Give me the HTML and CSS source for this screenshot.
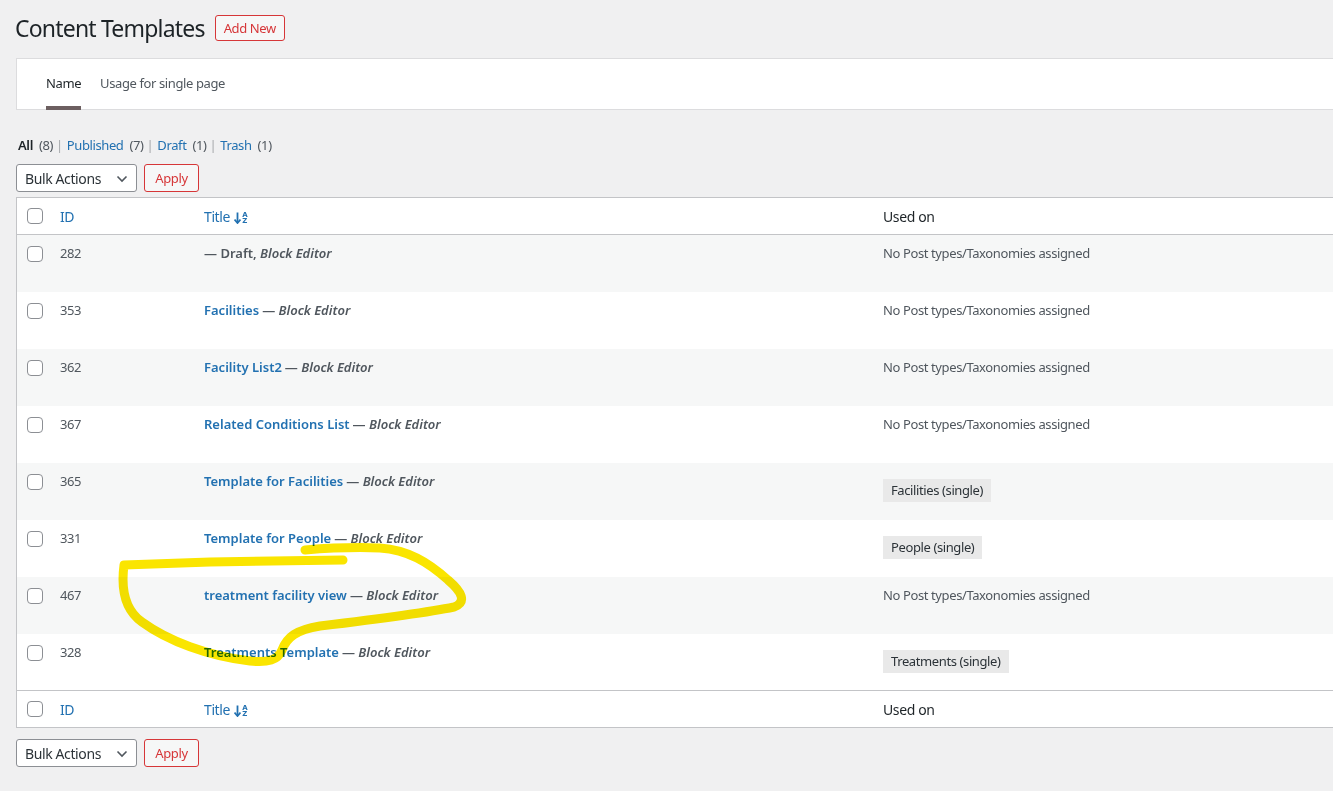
FILE: index.html
```html
<!DOCTYPE html>
<html>
<head>
<meta charset="utf-8">
<link rel="stylesheet" href="styles.css">
</head>
<body>
<div class="wrap">
  <div class="head">
    <h1 class="title">Content Templates</h1>
    <a class="btn-outline add-new">Add New</a>
  </div>

  <div class="tabs">
    <a class="tab active">Name</a>
    <a class="tab">Usage for single page</a>
  </div>

  <ul class="subsub">
    <li><b class="current">All</b><span class="count">(8)</span><span class="sep">|</span></li>
    <li><a>Published</a><span class="count">(7)</span><span class="sep">|</span></li>
    <li><a>Draft</a><span class="count">(1)</span><span class="sep">|</span></li>
    <li><a>Trash</a><span class="count">(1)</span></li>
  </ul>

  <div class="tablenav top">
    <div class="select">Bulk Actions
      <svg class="chev" width="12" height="8" viewBox="0 0 12 8"><path d="M1.5 1.5 L6 6 L10.5 1.5" fill="none" stroke="#50575e" stroke-width="1.6"/></svg>
    </div>
    <a class="btn-outline apply">Apply</a>
  </div>

  <table class="list">
    <thead>
      <tr class="hrow">
        <th class="cb"><span class="box"></span></th>
        <th class="c-id"><a>ID</a></th>
        <th class="c-title"><a>Title <span class="sort"><svg width="7" height="12" viewBox="0 0 7 12"><path d="M3.5 0.5 V10" stroke="#2271b1" stroke-width="1.8"/><path d="M0.5 7.5 L3.5 11 L6.5 7.5" fill="none" stroke="#2271b1" stroke-width="1.8"/></svg><span class="az"><i>A</i><i>Z</i></span></span></a></th>
        <th class="c-used">Used on</th>
      </tr>
    </thead>
    <tbody>
      <tr class="alt">
        <td class="cb"><span class="box"></span></td><td class="c-id">282</td>
        <td class="c-title"><span class="dash">— Draft, <em>Block Editor</em></span></td>
        <td class="c-used none">No Post types/Taxonomies assigned</td>
      </tr>
      <tr>
        <td class="cb"><span class="box"></span></td><td class="c-id">353</td>
        <td class="c-title"><a class="row-title">Facilities</a> <span class="dash">— <em>Block Editor</em></span></td>
        <td class="c-used none">No Post types/Taxonomies assigned</td>
      </tr>
      <tr class="alt">
        <td class="cb"><span class="box"></span></td><td class="c-id">362</td>
        <td class="c-title"><a class="row-title">Facility List2</a> <span class="dash">— <em>Block Editor</em></span></td>
        <td class="c-used none">No Post types/Taxonomies assigned</td>
      </tr>
      <tr>
        <td class="cb"><span class="box"></span></td><td class="c-id">367</td>
        <td class="c-title"><a class="row-title">Related Conditions List</a> <span class="dash">— <em>Block Editor</em></span></td>
        <td class="c-used none">No Post types/Taxonomies assigned</td>
      </tr>
      <tr class="alt">
        <td class="cb"><span class="box"></span></td><td class="c-id">365</td>
        <td class="c-title"><a class="row-title">Template for Facilities</a> <span class="dash">— <em>Block Editor</em></span></td>
        <td class="c-used"><span class="badge">Facilities (single)</span></td>
      </tr>
      <tr>
        <td class="cb"><span class="box"></span></td><td class="c-id">331</td>
        <td class="c-title"><a class="row-title">Template for People</a> <span class="dash">— <em>Block Editor</em></span></td>
        <td class="c-used"><span class="badge">People (single)</span></td>
      </tr>
      <tr class="alt">
        <td class="cb"><span class="box"></span></td><td class="c-id">467</td>
        <td class="c-title"><a class="row-title">treatment facility view</a> <span class="dash">— <em>Block Editor</em></span></td>
        <td class="c-used none">No Post types/Taxonomies assigned</td>
      </tr>
      <tr>
        <td class="cb"><span class="box"></span></td><td class="c-id">328</td>
        <td class="c-title"><a class="row-title">Treatments Template</a> <span class="dash">— <em>Block Editor</em></span></td>
        <td class="c-used"><span class="badge">Treatments (single)</span></td>
      </tr>
    </tbody>
    <tfoot>
      <tr class="hrow">
        <th class="cb"><span class="box"></span></th>
        <th class="c-id"><a>ID</a></th>
        <th class="c-title"><a>Title <span class="sort"><svg width="7" height="12" viewBox="0 0 7 12"><path d="M3.5 0.5 V10" stroke="#2271b1" stroke-width="1.8"/><path d="M0.5 7.5 L3.5 11 L6.5 7.5" fill="none" stroke="#2271b1" stroke-width="1.8"/></svg><span class="az"><i>A</i><i>Z</i></span></span></a></th>
        <th class="c-used">Used on</th>
      </tr>
    </tfoot>
  </table>

  <div class="tablenav bottom">
    <div class="select">Bulk Actions
      <svg class="chev" width="12" height="8" viewBox="0 0 12 8"><path d="M1.5 1.5 L6 6 L10.5 1.5" fill="none" stroke="#50575e" stroke-width="1.6"/></svg>
    </div>
    <a class="btn-outline apply">Apply</a>
  </div>
</div>

<svg class="scribble" width="1333" height="791" viewBox="0 0 1333 791">
  <path d="M343 560 L210 562 L124 565 C121 588 125 610 142 622 C168 641 208 656 250 661 C268 663 278 660 282 650 C287 637 296 630 320 626 C370 620 420 614 454 607 C467 602 462 592 448 580 C428 562 408 550 380 548 C355 547 330 548 305 550"
    fill="none" stroke="#fae500" stroke-width="9" stroke-linecap="round" stroke-linejoin="round"/>
</svg>
</body>
</html>
```

FILE: styles.css
```css
html, body {
  margin: 0;
  padding: 0;
}
body {
  background: #f0f0f1;
  font-family: "Noto Sans", "Open Sans", sans-serif;
  font-size: 13px;
  letter-spacing: -0.03em;
  color: #3c434a;
  overflow: hidden;
  width: 1333px;
  height: 791px;
  position: relative;
}
a { text-decoration: none; cursor: pointer; }

.wrap {
  padding: 0 0 0 16px;
  width: 1340px;
}

.head {
  display: flex;
  align-items: center;
  gap: 10px;
  padding-top: 13px;
  height: 30px;
}
.title {
  margin: 0 0 0 -1px;
  font-size: 23px;
  font-weight: 400;
  color: #1d2327;
  line-height: 29px;
  letter-spacing: -0.035em;
}
.btn-outline {
  display: inline-flex;
  align-items: center;
  justify-content: center;
  box-sizing: border-box;
  border: 1px solid #d63638;
  color: #d63638;
  background: #f6f7f7;
  border-radius: 3px;
}
.add-new {
  height: 26px;
  padding: 0 8px;
  font-size: 13px;
}

.tabs {
  margin-top: 15px;
  height: 52px;
  box-sizing: border-box;
  background: #fff;
  border: 1px solid #dcdcde;
  border-right: none;
  display: flex;
  gap: 19px;
  padding-left: 29px;
}
.tab {
  color: #50575e;
  font-size: 13px;
  display: flex;
  align-items: flex-start;
  padding-top: 15px;
  box-sizing: border-box;
  height: 51px;
  border-bottom: 4px solid transparent;
}
.tab.active {
  color: #1d2327;
  border-bottom-color: #6c5f60;
}

.subsub {
  list-style: none;
  margin: 25px 0 0 2px;
  padding: 0;
  display: flex;
  font-size: 13px;
  line-height: 20px;
  color: #646970;
}
.subsub li { white-space: pre; }
.subsub a { color: #2271b1; }
.subsub .current { color: #1d2327; font-weight: 600; }
.subsub .count { color: #50575e; margin-left: 6px; }
.subsub .sep { color: #a7aaad; padding: 0 4px 0 3px; }

.tablenav {
  display: flex;
  gap: 7px;
  height: 28px;
}
.tablenav.top { margin-top: 9px; margin-bottom: 5px; }
.tablenav.bottom { margin-top: 11px; }
.select {
  width: 121px;
  height: 28px;
  box-sizing: border-box;
  border: 1px solid #8c8f94;
  border-radius: 3px;
  background: #fff;
  color: #2c3338;
  font-size: 14px;
  display: flex;
  align-items: center;
  justify-content: space-between;
  padding: 0 8px 0 8px;
}
.chev { margin-top: 1px; }
.apply {
  width: 55px;
  height: 28px;
  font-size: 13px;
}

.list {
  width: 1340px;
  border-collapse: collapse;
  background: #fff;
  border: 1px solid #c3c4c7;
  table-layout: fixed;
}
.list th, .list td {
  text-align: left;
  font-weight: 400;
  padding: 0 10px;
  vertical-align: top;
}
.hrow th {
  height: 36px;
  vertical-align: middle;
  font-size: 14px;
  color: #1d2327;
}
thead .hrow th { border-bottom: 1px solid #c3c4c7; }
tfoot .hrow th { border-top: 1px solid #c3c4c7; }
.hrow a { color: #2271b1; }
.list .cb { width: 23px; padding: 0 0 0 10px; }
.list .c-id { width: 124px; }
.list .c-title { width: 659px; }

.list tbody td {
  height: 57px;
  box-sizing: border-box;
  padding-top: 9px;
  font-size: 13px;
  line-height: 19px;
}
.list tbody td.cb { padding-top: 11px; }
.list tbody .c-id { color: #50575e; }
tbody tr.alt td { background: #f6f7f7; }
.row-title {
  color: #2271b1;
  font-weight: 600;
  letter-spacing: 0;
}
.dash {
  color: #50575e;
  font-weight: 600;
  letter-spacing: 0;
}
.dash em { font-style: italic; }
.none { color: #50575e; }

.badge {
  display: inline-block;
  margin-top: 7px;
  background: #e9e9e9;
  color: #2c3338;
  padding: 2px 8px;
  line-height: 19px;
}

.box {
  display: block;
  width: 16px;
  height: 16px;
  box-sizing: border-box;
  border: 1px solid #8c8f94;
  border-radius: 4px;
  background: #fff;
}

.sort {
  display: inline-flex;
  align-items: center;
  gap: 1px;
  vertical-align: middle;
  margin-left: 1px;
}
.az {
  display: inline-flex;
  flex-direction: column;
  line-height: 6px;
}
.az i {
  font-style: normal;
  font-size: 7px;
  font-weight: 700;
  color: #2271b1;
  font-family: "DejaVu Sans", sans-serif;
}

.scribble {
  position: absolute;
  left: 0;
  top: 0;
  pointer-events: none;
  mix-blend-mode: multiply;
}
```
